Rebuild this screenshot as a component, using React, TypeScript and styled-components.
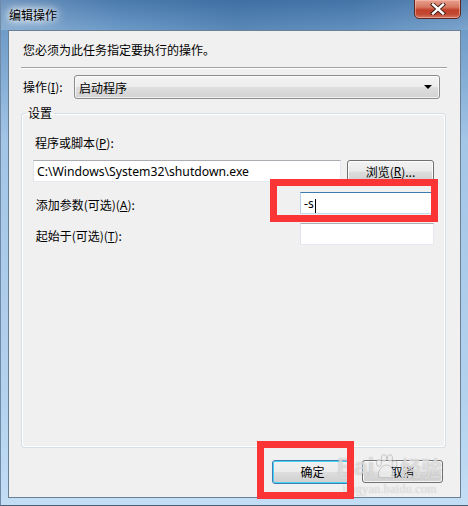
import React from "react";
import styled, { createGlobalStyle } from "styled-components";

const GlobalStyle = createGlobalStyle`
  html, body {
    margin: 0;
    padding: 0;
    background: #9fc2e3;
  }
  body {
    font-family: "Noto Sans", "Noto Sans CJK SC", sans-serif;
    font-size: 12px;
    color: #000;
  }
`;

const Window = styled.div`
  position: relative;
  box-sizing: border-box;
  width: 468px;
  height: 506px;
  display: flex;
  flex-direction: column;
  padding: 0 7px 7px 7px;
  border-left: 1px solid #6f8aa6;
  border-bottom: 1px solid #4b5d70;
  background: linear-gradient(
    to bottom,
    #4a7aad 0px,
    #6d9bc8 30px,
    #a3c5e6 140px,
    #b3d2ee 400px,
    #c3ddf4 100%
  );
  overflow: hidden;
`;

const TitleBar = styled.div`
  height: 30px;
  display: flex;
  align-items: flex-start;
  justify-content: space-between;
  background: linear-gradient(
    to right,
    rgba(255, 255, 255, 0.2) 0,
    rgba(255, 255, 255, 0) 25%,
    rgba(30, 80, 135, 0.25) 50%,
    rgba(30, 80, 135, 0.15) 75%,
    rgba(255, 255, 255, 0.1) 100%
  );
  margin: 0 -7px;
  padding: 0 7px 0 7px;
`;

const Title = styled.div`
  font-family: "Noto Sans CJK SC", sans-serif;
  font-size: 12px;
  line-height: 16px;
  margin-top: 7px;
  padding-left: 1px;
  text-shadow: 0 0 6px #fff, 0 0 10px #fff, 0 0 14px rgba(255, 255, 255, 0.9);
`;

const CloseButton = styled.div`
  box-sizing: border-box;
  width: 47px;
  height: 20px;
  margin-top: -1px;
  display: flex;
  align-items: center;
  justify-content: center;
  border: 1px solid #5a2a22;
  border-radius: 0 0 5px 5px;
  background: linear-gradient(
    to bottom,
    #e8a08e 0%,
    #d57760 40%,
    #c2402a 55%,
    #c24a33 80%,
    #d9786a 100%
  );
  box-shadow: inset 0 0 0 1px rgba(255, 200, 190, 0.5);
`;

const Client = styled.div`
  flex: 1;
  display: flex;
  flex-direction: column;
  background: #f0f0f0;
  border: 1px solid #6b7f95;
  font-family: "Noto Sans", "Noto Sans CJK SC", sans-serif;
`;

const Intro = styled.div`
  font-family: "Noto Sans CJK SC", sans-serif;
  line-height: 16px;
  padding: 11px 14px 0 14px;
`;

const Separator = styled.div`
  height: 1px;
  margin: 9px 13px 0 12px;
  background: #a0a0a0;
  border-bottom: 1px solid #fff;
`;

const FieldRow = styled.div`
  display: flex;
  align-items: center;
  margin-top: 6px;
  padding: 0 20px 0 14px;
`;

const Label = styled.span<{ $width?: number }>`
  font-family: "Noto Sans CJK SC", sans-serif;
  line-height: 16px;
  width: ${(p) => (p.$width ? `${p.$width}px` : "auto")};
  flex-shrink: 0;
  u {
    font-family: "Noto Sans", sans-serif;
  }
`;

const Combo = styled.div`
  flex: 1;
  box-sizing: border-box;
  height: 24px;
  display: flex;
  align-items: center;
  justify-content: space-between;
  padding: 0 7px 0 4px;
  border: 1px solid #8c8c8c;
  border-radius: 3px;
  background: linear-gradient(
    to bottom,
    #f4f4f4 0%,
    #ececec 48%,
    #dedede 52%,
    #d2d2d2 100%
  );
  box-shadow: inset 0 0 0 1px rgba(255, 255, 255, 0.7);
  font-family: "Noto Sans CJK SC", sans-serif;
`;

const Arrow = styled.span`
  width: 0;
  height: 0;
  border-left: 4px solid transparent;
  border-right: 4px solid transparent;
  border-top: 4px solid #000;
`;

const Group = styled.fieldset`
  flex: 1;
  min-height: 0;
  min-width: 0;
  margin: 6px 14px 0 12px;
  padding: 14px 11px 0 11px;
  border: 1px solid #d5dfe5;
  border-radius: 3px;
  box-shadow: inset 0 0 0 1px #fff;
`;

const Legend = styled.legend`
  font-family: "Noto Sans CJK SC", sans-serif;
  line-height: 16px;
  padding: 0 2px;
  margin-left: -7px;
`;

const SubLabel = styled(Label)`
  display: block;
  padding-left: 2px;
`;

const PathRow = styled.div`
  display: flex;
  gap: 6px;
  margin-top: 8px;
`;

const TextBox = styled.div<{ $width?: number; $focused?: boolean }>`
  box-sizing: border-box;
  height: 22px;
  width: ${(p) => (p.$width ? `${p.$width}px` : "auto")};
  flex: ${(p) => (p.$width ? "none" : "1")};
  display: flex;
  align-items: center;
  padding: 0 3px;
  background: #fff;
  border: 1px solid ${(p) => (p.$focused ? "#c5daed" : "#e3e9ef")};
  border-top-color: ${(p) => (p.$focused ? "#3d7bad" : "#abadb3")};
  border-left-color: ${(p) => (p.$focused ? "#b5cfe7" : "#e2e3ea")};
  font-family: "Noto Sans", sans-serif;
  font-size: 12.2px;
  white-space: nowrap;
`;

const Caret = styled.span`
  display: inline-block;
  width: 1px;
  height: 14px;
  background: #000;
  margin-left: 1px;
`;

const Button = styled.div<{ $default?: boolean; $width: number }>`
  box-sizing: border-box;
  width: ${(p) => p.$width}px;
  height: ${(p) => (p.$default ? 24 : 23)}px;
  display: flex;
  align-items: center;
  justify-content: center;
  border: 1px solid ${(p) => (p.$default ? "#3c7fb1" : "#707070")};
  border-radius: 3px;
  background: linear-gradient(
    to bottom,
    #f2f2f2 0%,
    #ebebeb 48%,
    #dddddd 52%,
    #cfcfcf 100%
  );
  box-shadow: inset 0 0 0 1px
    ${(p) => (p.$default ? "#48d1f9" : "rgba(255,255,255,0.8)")};
  font-family: "Noto Sans CJK SC", sans-serif;
  line-height: 16px;
  u {
    font-family: "Noto Sans", sans-serif;
  }
`;

const ArgRow = styled.div`
  display: flex;
  align-items: center;
  justify-content: space-between;
  margin-top: 9px;
  span {
    margin-top: 5px;
  }
`;

const Footer = styled.div`
  display: flex;
  justify-content: flex-end;
  gap: 9px;
  padding: 12px 17px 13px 0;
`;

const Highlight = styled.div<{ $x: number; $y: number; $w: number; $h: number }>`
  position: absolute;
  left: ${(p) => p.$x}px;
  top: ${(p) => p.$y}px;
  width: ${(p) => p.$w}px;
  height: ${(p) => p.$h}px;
  box-sizing: border-box;
  border: 7px solid #fb3535;
  pointer-events: none;
`;

const Watermark = styled.div`
  position: absolute;
  left: 336px;
  top: 453px;
  display: flex;
  flex-direction: column;
  align-items: center;
  color: rgba(238, 238, 238, 0.7);
  pointer-events: none;
`;

const MarkTop = styled.div`
  display: flex;
  align-items: center;
  font-family: "Liberation Sans", sans-serif;
  font-weight: bold;
  font-size: 24px;
  line-height: 28px;
  text-shadow: 0 0 1px rgba(120, 120, 120, 0.5);
  span {
    font-family: "Noto Sans CJK SC", sans-serif;
    font-size: 21px;
    margin-left: 2px;
  }
`;

const MarkUrl = styled.div`
  font-family: "Liberation Serif", serif;
  font-size: 12px;
  line-height: 12px;
  margin-top: 2px;
  letter-spacing: 0.3px;
  text-shadow: 0 0 1px rgba(120, 120, 120, 0.4);
`;

const Paw = () => (
  <svg width="24" height="26" viewBox="0 0 24 26">
    <g fill="rgba(238,238,238,0.75)" stroke="rgba(130,130,130,0.45)" strokeWidth="0.8">
      <ellipse cx="5" cy="9" rx="2.6" ry="3.4" />
      <ellipse cx="10" cy="4" rx="2.6" ry="3.4" />
      <ellipse cx="16" cy="4" rx="2.6" ry="3.4" />
      <ellipse cx="20.5" cy="10" rx="2.6" ry="3.4" />
      <path d="M12.5 11 C8 11 4 17 4.5 21 C5 25 10 23.5 12.5 23.5 C15 23.5 20 25 20.5 21 C21 17 17 11 12.5 11 Z" />
    </g>
  </svg>
);

const CloseGlyph = () => (
  <svg width="16" height="12" viewBox="0 0 16 12">
    <path
      d="M3 1.5 L13 10.5 M13 1.5 L3 10.5"
      stroke="#3a1a14"
      strokeWidth="4.2"
      strokeLinecap="square"
    />
    <path
      d="M3 1.5 L13 10.5 M13 1.5 L3 10.5"
      stroke="#fff"
      strokeWidth="2.4"
      strokeLinecap="square"
    />
  </svg>
);

const App = () => {
  return (
    <>
      <GlobalStyle />
      <Window>
        <TitleBar>
          <Title>编辑操作</Title>
          <CloseButton>
            <CloseGlyph />
          </CloseButton>
        </TitleBar>
        <Client>
          <Intro>您必须为此任务指定要执行的操作。</Intro>
          <Separator />
          <FieldRow>
            <Label $width={51}>
              操作(<u>I</u>):
            </Label>
            <Combo>
              启动程序
              <Arrow />
            </Combo>
          </FieldRow>
          <Group>
            <Legend>设置</Legend>
            <SubLabel>
              程序或脚本(<u>P</u>):
            </SubLabel>
            <PathRow>
              <TextBox $width={308}>C:\Windows\System32\shutdown.exe</TextBox>
              <Button $width={88}>
                浏览(<u>R</u>)...
              </Button>
            </PathRow>
            <ArgRow>
              <Label>
                &nbsp;添加参数(可选)(<u>A</u>):
              </Label>
              <TextBox $width={134} $focused>
                -s
                <Caret />
              </TextBox>
            </ArgRow>
            <ArgRow>
              <Label>
                &nbsp;起始于(可选)(<u>T</u>):
              </Label>
              <TextBox $width={134} />
            </ArgRow>
          </Group>
          <Footer>
            <Button $width={81} $default>
              确定
            </Button>
            <Button $width={81}>取消</Button>
          </Footer>
        </Client>
        <Watermark>
          <MarkTop>
            Bai
            <Paw />
            <span>经验</span>
          </MarkTop>
          <MarkUrl>jingyan.baidu.com</MarkUrl>
        </Watermark>
        <Highlight $x={269} $y={179} $w={168} $h={43} />
        <Highlight $x={256} $y={441} $w={97} $h={58} />
      </Window>
    </>
  );
};

export default App;
